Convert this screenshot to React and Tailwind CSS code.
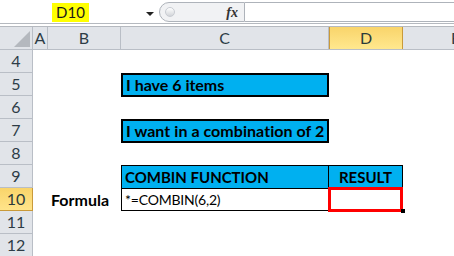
import React from "react";

const COLS = [
  { key: "A", w: "w-[15px]" },
  { key: "B", w: "w-[73px]" },
  { key: "C", w: "w-[208px]" },
  { key: "D", w: "w-[74px]" },
  { key: "E", w: "w-[106px]" },
];

function RowHeader({ n, active }) {
  return (
    <div
      className={
        "w-[33px] h-full shrink-0 flex items-center justify-center text-[16px] border-r border-b " +
        (active
          ? "bg-gradient-to-b from-[#f9d46a] to-[#ffe48a] border-[#c99a3a] text-[#2a3a3a]"
          : "bg-[#e1e4e9] border-[#b9bec6] text-[#2d3c46]")
      }
    >
      {n}
    </div>
  );
}

function Row({ n, active, children }) {
  return (
    <div className="flex h-[23px]">
      <RowHeader n={n} active={active} />
      {children}
    </div>
  );
}

function Empty({ w }) {
  return <div className={w + " h-full shrink-0"} />;
}

export default function App() {
  return (
    <div
      className="w-[454px] h-[256px] overflow-hidden bg-white text-black"
      style={{ fontFamily: "Lato, 'Open Sans', sans-serif" }}
    >
      {/* formula bar */}
      <div className="flex h-[23px] bg-white">
        <div className="w-[159px] shrink-0 flex items-center relative">
          <div className="ml-[52px] mt-[2px] w-[37px] h-[19px] bg-[#ffff00] flex items-center justify-center text-[15px] text-[#1a1a1a]">
            D10
          </div>
          <div className="absolute left-[146px] top-[12px] w-0 h-0 border-l-[4px] border-r-[4px] border-t-[4px] border-l-transparent border-r-transparent border-t-[#222]" />
        </div>
        <div className="w-[86px] shrink-0 mt-[2px] h-[20px] flex items-center justify-end bg-[#f1f2f4] border border-[#aeb3ba] rounded-l-[10px] relative">
          <div className="absolute left-[5px] top-[4px] w-[10px] h-[10px] rounded-full bg-gradient-to-b from-[#ffffff] to-[#d2d5d9] border border-[#c8ccd2]" />
          <span
            className="pr-[6px] italic text-[14px] font-semibold text-[#333]"
            style={{ fontFamily: "'Liberation Serif', serif" }}
          >
            fx
          </span>
        </div>
        <div className="flex-1 mt-[2px] h-[20px] border-t border-b border-[#aeb3ba] bg-white" />
      </div>
      {/* separator */}
      <div className="h-[4px] border-t border-b border-[#b5b9bf] bg-white" />
      {/* column headers */}
      <div className="flex h-[23px] bg-[#e1e4e9] border-b border-[#b9bec6]">
        <div className="w-[33px] shrink-0 h-full border-r border-[#b9bec6] relative">
          <svg className="absolute right-[2px] bottom-[2px]" width="16" height="16" viewBox="0 0 16 16">
            <polygon points="16,0 16,16 0,16" fill="#b4b8be" />
          </svg>
        </div>
        {COLS.map((c) => (
          <div
            key={c.key}
            className={
              c.w +
              " h-full shrink-0 flex items-center justify-center text-[16px] border-r " +
              (c.key === "D"
                ? "bg-gradient-to-b from-[#f9d46a] to-[#ffe88e] border-l border-[#c99a3a] text-[#2a3a3a]"
                : "border-[#b9bec6] text-[#2d3c46]")
            }
          >
            {c.key}
          </div>
        ))}
      </div>
      {/* rows */}
      <Row n={4}>
        <Empty w="flex-1" />
      </Row>
      <Row n={5}>
        <Empty w="w-[15px]" />
        <Empty w="w-[73px]" />
        <div className="w-[208px] h-[24px] shrink-0 bg-[#00b0f0] border-2 border-black flex items-center pl-[3px] font-bold text-[16px] whitespace-nowrap overflow-hidden">
          I have 6 items
        </div>
        <Empty w="flex-1" />
      </Row>
      <Row n={6}>
        <Empty w="flex-1" />
      </Row>
      <Row n={7}>
        <Empty w="w-[15px]" />
        <Empty w="w-[73px]" />
        <div className="w-[208px] h-[24px] shrink-0 bg-[#00b0f0] border-2 border-black flex items-center pl-[3px] font-bold text-[16px] tracking-[0.05px] whitespace-nowrap overflow-hidden">
          I want in a combination of 2
        </div>
        <Empty w="flex-1" />
      </Row>
      <Row n={8}>
        <Empty w="flex-1" />
      </Row>
      <Row n={9}>
        <Empty w="w-[15px]" />
        <Empty w="w-[73px]" />
        <div className="w-[208px] h-[24px] shrink-0 bg-[#00b0f0] border border-black flex items-center pl-[3px] font-bold text-[15px] whitespace-nowrap">
          COMBIN FUNCTION
        </div>
        <div className="w-[74px] h-[24px] shrink-0 bg-[#00b0f0] border border-l-0 border-black flex items-center justify-center font-bold text-[15px]">
          RESULT
        </div>
        <Empty w="flex-1" />
      </Row>
      <Row n={10} active>
        <Empty w="w-[15px]" />
        <div className="w-[73px] h-full shrink-0 flex items-center pl-[3px] font-bold text-[16px] whitespace-nowrap">
          Formula
        </div>
        <div className="w-[208px] h-full shrink-0 border-l border-r border-b border-black flex items-center pl-[3px] text-[14px] tracking-[-0.2px] whitespace-nowrap">
          *=COMBIN(6,2)
        </div>
        <div className="w-[74px] h-full shrink-0 relative border-b border-black">
          <div className="absolute -left-[1px] -top-[1px] w-[75px] h-[25px] border-[3px] border-[#ff0000]" />
          <div className="absolute -right-[2px] -bottom-[3px] w-[4px] h-[4px] bg-black" />
        </div>
        <Empty w="flex-1" />
      </Row>
      <Row n={11}>
        <Empty w="flex-1" />
      </Row>
      <Row n={12}>
        <Empty w="flex-1" />
      </Row>
    </div>
  );
}
